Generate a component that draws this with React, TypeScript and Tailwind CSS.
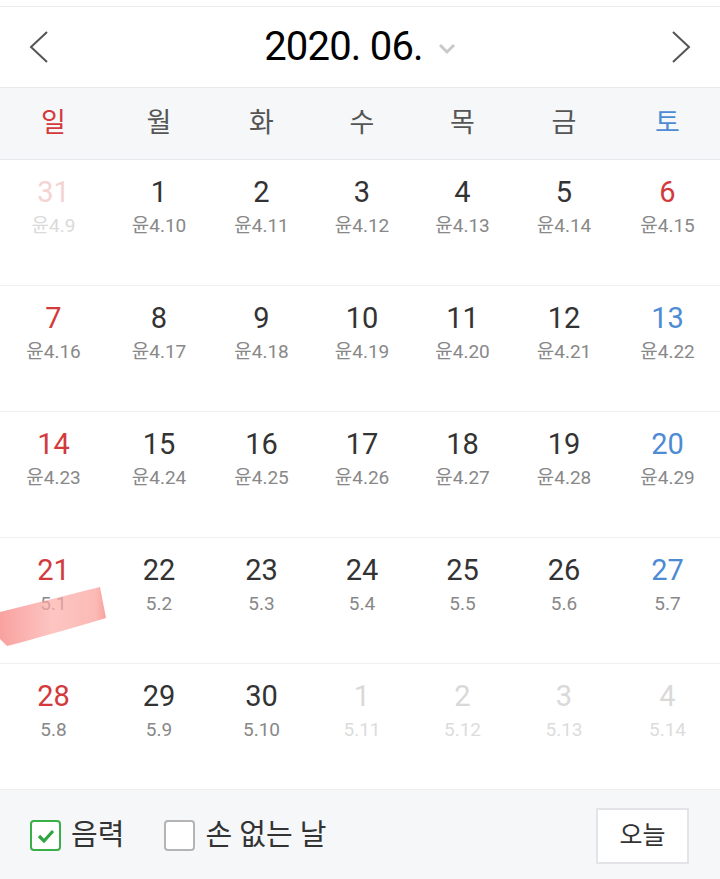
import React from "react";

type Cell = { d: string; l: string; kind: "sun" | "sat" | "norm" | "fadeSun" | "fade" };

const weeks: Cell[][] = [
  [
    { d: "31", l: "윤4.9", kind: "fadeSun" },
    { d: "1", l: "윤4.10", kind: "norm" },
    { d: "2", l: "윤4.11", kind: "norm" },
    { d: "3", l: "윤4.12", kind: "norm" },
    { d: "4", l: "윤4.13", kind: "norm" },
    { d: "5", l: "윤4.14", kind: "norm" },
    { d: "6", l: "윤4.15", kind: "sun" },
  ],
  [
    { d: "7", l: "윤4.16", kind: "sun" },
    { d: "8", l: "윤4.17", kind: "norm" },
    { d: "9", l: "윤4.18", kind: "norm" },
    { d: "10", l: "윤4.19", kind: "norm" },
    { d: "11", l: "윤4.20", kind: "norm" },
    { d: "12", l: "윤4.21", kind: "norm" },
    { d: "13", l: "윤4.22", kind: "sat" },
  ],
  [
    { d: "14", l: "윤4.23", kind: "sun" },
    { d: "15", l: "윤4.24", kind: "norm" },
    { d: "16", l: "윤4.25", kind: "norm" },
    { d: "17", l: "윤4.26", kind: "norm" },
    { d: "18", l: "윤4.27", kind: "norm" },
    { d: "19", l: "윤4.28", kind: "norm" },
    { d: "20", l: "윤4.29", kind: "sat" },
  ],
  [
    { d: "21", l: "5.1", kind: "sun" },
    { d: "22", l: "5.2", kind: "norm" },
    { d: "23", l: "5.3", kind: "norm" },
    { d: "24", l: "5.4", kind: "norm" },
    { d: "25", l: "5.5", kind: "norm" },
    { d: "26", l: "5.6", kind: "norm" },
    { d: "27", l: "5.7", kind: "sat" },
  ],
  [
    { d: "28", l: "5.8", kind: "sun" },
    { d: "29", l: "5.9", kind: "norm" },
    { d: "30", l: "5.10", kind: "norm" },
    { d: "1", l: "5.11", kind: "fade" },
    { d: "2", l: "5.12", kind: "fade" },
    { d: "3", l: "5.13", kind: "fade" },
    { d: "4", l: "5.14", kind: "fade" },
  ],
];

const numColor: Record<Cell["kind"], string> = {
  sun: "text-[#d23a3c]",
  sat: "text-[#4d8bd4]",
  norm: "text-[#333333]",
  fadeSun: "text-[#f5d3d3]",
  fade: "text-[#d9d9d9]",
};
const lunColor: Record<Cell["kind"], string> = {
  sun: "text-[#888888]",
  sat: "text-[#888888]",
  norm: "text-[#888888]",
  fadeSun: "text-[#dadada]",
  fade: "text-[#dcdcdc]",
};

const days = [
  { t: "일", c: "text-[#d23a3c]" },
  { t: "월", c: "text-[#555555]" },
  { t: "화", c: "text-[#555555]" },
  { t: "수", c: "text-[#555555]" },
  { t: "목", c: "text-[#555555]" },
  { t: "금", c: "text-[#555555]" },
  { t: "토", c: "text-[#4d8bd4]" },
];

const cols = "grid grid-cols-[107px_104px_101px_100px_101px_102px_105px]";

export default function App() {
  return (
    <div
      className="relative w-[720px] h-[879px] bg-white flex flex-col overflow-hidden"
      style={{ fontFamily: 'Roboto, "Noto Sans CJK KR", sans-serif' }}
    >
      <div className="h-[7px] bg-white border-b border-[#ebebeb] shrink-0" />
      <div className="h-[80px] shrink-0 flex items-center justify-between px-[29px]">
        <svg width="20" height="32" viewBox="0 0 20 32" fill="none">
          <polyline points="18,1 2,16 18,31" stroke="#555" strokeWidth="2" />
        </svg>
        <div className="flex items-center gap-[15px]">
          <span className="text-[40px] leading-none text-black tracking-[-0.8px]">2020. 06.</span>
          <svg width="18" height="12" viewBox="0 0 18 12" fill="none" className="mt-[4px]">
            <polyline points="2,2 9,9 16,2" stroke="#c9c9c9" strokeWidth="3" />
          </svg>
        </div>
        <svg width="20" height="32" viewBox="0 0 20 32" fill="none">
          <polyline points="2,1 18,16 2,31" stroke="#555" strokeWidth="2" />
        </svg>
      </div>
      <div className={`h-[73px] shrink-0 bg-[#f6f7f9] border-y border-[#e6e8eb] ${cols} items-center`}>
        {days.map((d) => (
          <div key={d.t} className={`text-center text-[27px] leading-none ${d.c}`}>
            {d.t}
          </div>
        ))}
      </div>
      {weeks.map((w, i) => (
        <div key={i} className={`h-[126px] shrink-0 ${cols} border-b border-[#efefef]`}>
          {w.map((c, j) => (
            <div key={j} className="flex flex-col items-center pt-[15px]">
              <span className={`text-[29px] leading-[34px] ${numColor[c.kind]}`}>{c.d}</span>
              <span className={`text-[19px] leading-[22px] mt-[6px] ${lunColor[c.kind]}`}>{c.l}</span>
            </div>
          ))}
        </div>
      ))}
      <div className="flex-1 bg-[#f6f7f9] flex items-center justify-between pl-[30px] pr-[31px] pt-[2px]">
        <div className="flex items-center">
          <div className="w-[31px] h-[31px] rounded-[4px] border-2 border-[#3aae48] bg-white flex items-center justify-center">
            <svg width="20" height="16" viewBox="0 0 20 16" fill="none">
              <polyline points="3,8 8,13 17,3" stroke="#2fa640" strokeWidth="3.2" />
            </svg>
          </div>
          <span className="ml-[10px] text-[29px] leading-none text-[#333]">음력</span>
          <div className="ml-[40px] w-[31px] h-[31px] rounded-[4px] border-2 border-[#b4b4b4] bg-white" />
          <span className="ml-[10px] text-[29px] leading-none text-[#333]">손 없는 날</span>
        </div>
        <div className="w-[93px] h-[56px] bg-white border-2 border-[#e2e4e7] flex items-center justify-center text-[25px] text-[#333]">
          오늘
        </div>
      </div>
      <svg className="absolute left-0 top-[585px]" width="110" height="64" viewBox="0 0 110 64">
        <defs>
          <linearGradient id="pk" x1="0" y1="0" x2="1" y2="0">
            <stop offset="0" stopColor="#f78a87" stopOpacity="0.8" />
            <stop offset="0.5" stopColor="#fcaca7" stopOpacity="0.7" />
            <stop offset="0.9" stopColor="#fba39e" stopOpacity="0.75" />
            <stop offset="1" stopColor="#f5908b" stopOpacity="0.85" />
          </linearGradient>
        </defs>
        <path d="M0,27 L100,2 L106,33 Q70,44 40,52 Q20,58 7,61 L0,54 Z" fill="url(#pk)" />
      </svg>
    </div>
  );
}
